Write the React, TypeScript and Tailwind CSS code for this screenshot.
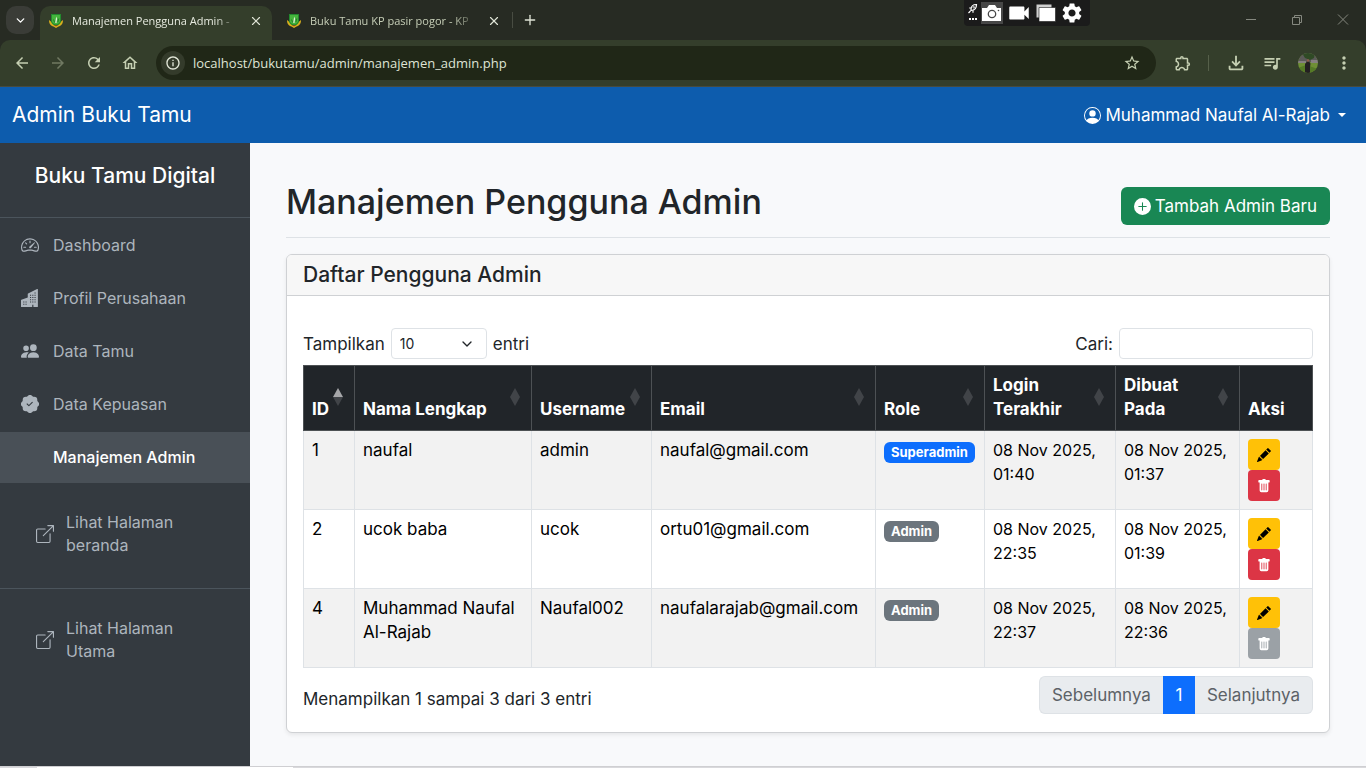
import type { ReactNode } from 'react';
import {
  BsBoxArrowUpRight,
  BsBuildingsFill,
  BsPatchCheckFill,
  BsPencilFill,
  BsPeopleFill,
  BsPersonCircle,
  BsPlusCircleFill,
  BsSpeedometer2,
  BsTrashFill,
} from 'react-icons/bs';
import {
  MdArrowBack,
  MdArrowForward,
  MdInfoOutline,
  MdMoreVert,
  MdOutlineExtension,
  MdOutlineFileDownload,
  MdOutlineHome,
  MdOutlineQueueMusic,
  MdRefresh,
  MdStarOutline,
  MdSettings,
  MdVideocam,
} from 'react-icons/md';
import { ChevronDown, Plus, X } from 'lucide-react';
import clsx from 'clsx';

type Admin = {
  id: number;
  name: string;
  username: string;
  email: string;
  role: 'Superadmin' | 'Admin';
  lastLogin: string;
  createdAt: string;
  canDelete: boolean;
};

const admins: Admin[] = [
  { id: 1, name: 'naufal', username: 'admin', email: 'naufal@gmail.com', role: 'Superadmin', lastLogin: '08 Nov 2025, 01:40', createdAt: '08 Nov 2025, 01:37', canDelete: true },
  { id: 2, name: 'ucok baba', username: 'ucok', email: 'ortu01@gmail.com', role: 'Admin', lastLogin: '08 Nov 2025, 22:35', createdAt: '08 Nov 2025, 01:39', canDelete: true },
  { id: 4, name: 'Muhammad Naufal Al-Rajab', username: 'Naufal002', email: 'naufalarajab@gmail.com', role: 'Admin', lastLogin: '08 Nov 2025, 22:37', createdAt: '08 Nov 2025, 22:36', canDelete: false },
];

const columns = [
  { label: 'ID', width: 'w-[51px]', sortable: true },
  { label: 'Nama Lengkap', width: 'w-[177px]', sortable: true },
  { label: 'Username', width: 'w-[120px]', sortable: true },
  { label: 'Email', width: '', sortable: true },
  { label: 'Role', width: 'w-[109px]', sortable: true },
  { label: 'Login Terakhir', width: 'w-[131px]', sortable: true },
  { label: 'Dibuat Pada', width: 'w-[124px]', sortable: true },
  { label: 'Aksi', width: 'w-[73px]', sortable: false },
];

const menu = [
  { label: 'Dashboard', icon: BsSpeedometer2 },
  { label: 'Profil Perusahaan', icon: BsBuildingsFill },
  { label: 'Data Tamu', icon: BsPeopleFill },
  { label: 'Data Kepuasan', icon: BsPatchCheckFill },
];

function Crest() {
  return (
    <svg viewBox="0 0 14 14" className="h-[14px] w-[14px] shrink-0">
      <path d="M0 6c0 4 2 6 4.500 6.500L7 14l2.500-1.500C12 12 14 10 14 6l-2.500 2h-9z" fill="#d9b01c" />
      <path d="M2 0h10v7c0 2.500-2 4-5 5-3-1-5-2.500-5-5z" fill="#238a2e" />
      <path d="M3 1h8v6.500C10 9.500 9 10 7 10.500 5 10 4 9.500 3 7.500z" fill="#45b53c" />
      <path d="M7.200 2.500l.9 2.300-.6 4.200H6.200l.5-3.500z" fill="#e4efd6" />
      <path d="M4.500 5.500l1.200 3M9.800 4.500l-.9 3.500" stroke="#1d6b28" strokeWidth=".8" />
      <path d="M5 11h4l-2 1.500z" fill="#8a4a1e" />
    </svg>
  );
}

function BrowserTab({ title, active }: { title: string; active?: boolean }) {
  return (
    <div
      className={clsx(
        'flex h-[34px] items-center px-[9px] pb-1',
        active ? 'w-[232px] rounded-t-[10px] bg-[#343e2b]' : 'ml-1 w-[235px] pl-[11px]'
      )}
    >
      <Crest />
      <span
        className={clsx(
          'ml-[9px] w-[168px] whitespace-nowrap text-[11px] [mask-image:linear-gradient(to_right,black_85%,transparent)]',
          active ? 'text-[#e6eadf]' : 'text-[#c5cdb6]'
        )}
      >
        {title}
      </span>
      <button aria-label="Tutup tab" className="ml-[9px] text-[#dfe4d6]">
        <X size={14} strokeWidth={2} />
      </button>
    </div>
  );
}

function CaptureBar() {
  return (
    <div className="absolute top-0 left-[964px] flex h-[26px] w-[126px] items-center rounded-b bg-[#1b1b1b] pl-1 text-white">
      <svg viewBox="0 0 10 20" className="h-5 w-[10px]" fill="none" stroke="white">
        <path d="M3 6.500C3 3.500 5 1.500 8.500 1.500 8.500 5 6.500 7.500 3 7.500zM3 5H1.200M5 8v1.800M.5 10l2-2" strokeWidth="1.200" />
        <circle cx="5.800" cy="4.300" r=".8" strokeWidth=".8" />
        <path d="M1 16h2M4 16h2M7 16h2" strokeWidth="2" />
      </svg>
      <svg viewBox="0 0 22 22" className="ml-[3px] h-[22px] w-[22px] bg-[#474747]">
        <path d="M1 6h5l2-3h6l2 3h4v13H1z" fill="white" />
        <circle cx="11" cy="12" r="3.700" fill="none" stroke="#474747" strokeWidth="1.300" />
        <circle cx="17.500" cy="8.500" r=".8" fill="#474747" />
      </svg>
      <MdVideocam className="ml-[3px] h-[26px] w-[26px]" />
      <svg viewBox="0 0 20 18" className="ml-1 h-[18px] w-5">
        <path d="M.5.5h15v13H.5z" fill="#cfcfcf" />
        <path d="M3 3.500h16.500v14H3z" fill="white" stroke="#1b1b1b" strokeWidth=".6" />
      </svg>
      <MdSettings className="ml-1 h-6 w-6" />
    </div>
  );
}

function BrowserChrome() {
  return (
    <div className="relative bg-[#272b23] font-['Open_Sans',sans-serif]">
      <div className="flex h-10 items-end pl-[6px]">
        <button aria-label="Cari tab" className="mb-[6px] flex h-7 w-7 items-center justify-center rounded-[10px] bg-[#3a3c37] text-white">
          <ChevronDown size={13} strokeWidth={2.5} />
        </button>
        <div className="ml-[6px] flex">
          <BrowserTab title="Manajemen Pengguna Admin -" active />
          <BrowserTab title="Buku Tamu KP pasir pogor - KP" />
        </div>
        <div className="mb-3 ml-px h-4 w-px bg-[#484c42]" />
        <button aria-label="Tab baru" className="mb-3 ml-[9px] text-[#dfe4d6]">
          <Plus size={16} strokeWidth={2} />
        </button>
        <svg viewBox="0 0 110 12" className="mr-4 mb-[14px] ml-auto h-3 w-[110px]" fill="none" stroke="#85887f">
          <path d="M6 5.500h10M52.500 3.500h7v7h-7zM54.500 3.500v-2h7v7h-2M98 .5l10 10M108 .5l-10 10" />
        </svg>
      </div>
      <CaptureBar />
      <div className="flex h-[47px] items-center rounded-t-[10px] border-b border-[#474b3e] bg-[#343e2b] pr-3 pl-[13px] text-[#c5cfb2]">
        <button aria-label="Kembali"><MdArrowBack size={18} /></button>
        <button aria-label="Maju" className="ml-[18px] text-[#707962]"><MdArrowForward size={18} /></button>
        <button aria-label="Muat ulang" className="ml-[18px]"><MdRefresh size={18} /></button>
        <button aria-label="Beranda" className="ml-[18px]"><MdOutlineHome size={18} /></button>
        <div className="ml-[17px] flex h-[34px] flex-1 items-center rounded-full bg-[#202717] pr-[15px] pl-[5px]">
          <span className="flex h-6 w-6 items-center justify-center rounded-full bg-[#343b2b] text-[#e3e8d9]">
            <MdInfoOutline size={16} />
          </span>
          <input
            aria-label="Alamat"
            defaultValue="localhost/bukutamu/admin/manajemen_admin.php"
            className="ml-2 flex-1 bg-transparent text-[13px] text-[#dfe4d5] outline-none"
          />
          <button aria-label="Tandai"><MdStarOutline size={18} /></button>
        </div>
        <button aria-label="Ekstensi" className="ml-[18px]"><MdOutlineExtension size={18} /></button>
        <div className="ml-4 h-4 w-px bg-[#56604a]" />
        <button aria-label="Unduhan" className="ml-4"><MdOutlineFileDownload size={22} /></button>
        <button aria-label="Media" className="ml-[15px]"><MdOutlineQueueMusic size={20} /></button>
        <svg viewBox="0 0 20 20" className="ml-4 h-5 w-5 rounded-full">
          <path d="M0 0h20v20H0z" fill="#6f8f35" />
          <path d="M0 0h20v9H0z" fill="#5b5a58" />
          <path d="M4 0h13l-1 5-4 2-5-2z" fill="#2f4a25" />
          <path d="M0 8h8v2H0zM13 7h7v3h-7z" fill="#857f80" />
          <path d="M0 15l8-3 12 4v4H0z" fill="#557a26" />
          <path d="M7 11l2-2.500h2l1.500 2-.5 4v5.500H7z" fill="#241f22" />
          <circle cx="10" cy="7.500" r="1.200" fill="#8f5d48" />
        </svg>
        <button aria-label="Menu" className="ml-4"><MdMoreVert size={20} /></button>
      </div>
    </div>
  );
}

function ExternalLink({ children }: { children: ReactNode }) {
  return (
    <a href="#" className="flex h-[105px] items-center gap-3 pr-12 pb-1 pl-9 leading-[23px]">
      <BsBoxArrowUpRight size={18} className="shrink-0" />
      <span>{children}</span>
    </a>
  );
}

function Sidebar() {
  return (
    <aside className="w-[250px] shrink-0 bg-[#343a40] text-[16px] text-[#adb5bd]">
      <h3 className="flex h-[75px] justify-center border-b border-[#4b545c] pt-[18px] text-[21px] leading-[30px] font-medium text-white">
        Buku Tamu Digital
      </h3>
      <nav>
        <div className="grid h-[214px] grid-rows-4 pb-[2px]">
          {menu.map(({ label, icon: Icon }) => (
            <a key={label} href="#" className="flex items-center gap-[14px] pl-[21px]">
              <Icon size={18} />
              {label}
            </a>
          ))}
        </div>
        <a href="#" className="flex h-[51px] items-center bg-[#495057] pb-[2px] pl-[53px] font-medium text-white">
          Manajemen Admin
        </a>
        <ExternalLink>Lihat Halaman beranda</ExternalLink>
        <div className="border-t border-[#4b545c]">
          <ExternalLink>Lihat Halaman Utama</ExternalLink>
        </div>
      </nav>
    </aside>
  );
}

function SortMark({ ascending }: { ascending: boolean }) {
  return (
    <svg viewBox="0 0 10 18" className="absolute right-[11px] bottom-6 h-[18px] w-[10px]">
      <path d="M5 0l5 9H0z" fill={ascending ? '#a6a7a9' : '#414448'} />
      <path d="M0 9h10l-5 9z" fill="#414448" />
    </svg>
  );
}

function AdminTable() {
  return (
    <table className="mt-[6px] w-full table-fixed border-collapse text-left text-[17px] text-black">
      <thead className="bg-[#212529] text-white">
        <tr>
          {columns.map((col) => (
            <th
              key={col.label}
              className={clsx(
                'relative border border-[#4d5154] pt-[7px] pb-[9px] pl-2 align-bottom font-bold',
                col.width,
                col.sortable ? 'pr-6' : 'pr-2'
              )}
            >
              {col.label}
              {col.sortable && <SortMark ascending={col.label === 'ID'} />}
            </th>
          ))}
        </tr>
      </thead>
      <tbody>
        {admins.map((admin) => (
          <tr key={admin.id} className="align-top odd:bg-[#f2f2f2] [&>td]:border [&>td]:border-[#dee2e6] [&>td]:px-2 [&>td]:pt-[7px] [&>td]:pb-2">
            <td>{admin.id}</td>
            <td>{admin.name}</td>
            <td>{admin.username}</td>
            <td>{admin.email}</td>
            <td>
              <span
                className={clsx(
                  'mt-1 block w-fit rounded-[6px] px-[7px] text-[13px] leading-[21px] font-bold text-white',
                  admin.role === 'Superadmin' ? 'bg-[#0d6efd]' : 'bg-[#6c757d]'
                )}
              >
                {admin.role}
              </span>
            </td>
            <td className="text-[16px]">{admin.lastLogin}</td>
            <td className="text-[16px]">{admin.createdAt}</td>
            <td>
              <button aria-label="Edit" className="mt-px flex h-[31px] w-8 items-center justify-center rounded bg-[#ffc107] text-black">
                <BsPencilFill size={14} />
              </button>
              <button
                aria-label="Hapus"
                disabled={!admin.canDelete}
                className={clsx(
                  'flex h-[31px] w-8 items-center justify-center rounded text-white',
                  admin.canDelete ? 'bg-[#dc3545]' : 'bg-[#9ba1a6]'
                )}
              >
                <BsTrashFill size={14} />
              </button>
            </td>
          </tr>
        ))}
      </tbody>
    </table>
  );
}

export default function App() {
  return (
    <div className="flex min-h-screen flex-col bg-[#f8f9fb] font-['Inter',sans-serif] text-[17px] leading-6 text-[#212529]">
      <BrowserChrome />
      <header className="flex h-14 items-center justify-between bg-[#0d5cad] pr-5 pl-3 text-white">
        <a href="#" className="text-[21px]">Admin Buku Tamu</a>
        <button className="flex items-center">
          <BsPersonCircle size={17} className="mr-1" />
          Muhammad Naufal Al-Rajab
          <span className="ml-2 border-x-4 border-t-4 border-x-transparent border-t-white" />
        </button>
      </header>

      <div className="flex flex-1">
        <Sidebar />
        <main className="min-w-0 flex-1 px-9 pt-10 pb-8">
          <div className="flex items-center justify-between border-b border-[#dee2e6] pb-3">
            <h1 className="pb-1 text-[34px] leading-[38px] font-medium">Manajemen Pengguna Admin</h1>
            <button className="mt-1 flex h-[38px] items-center rounded-[6px] bg-[#198754] px-[13px] text-white">
              <BsPlusCircleFill size={17} className="mr-1" />
              Tambah Admin Baru
            </button>
          </div>

          <section className="mt-4 overflow-hidden rounded-[6px] border border-[#cfd1d4] bg-white shadow-[0_2px_4px_rgba(0,0,0,0.075)]">
            <h2 className="border-b border-[#cfd1d4] bg-[#f7f7f7] px-4 py-2 text-[21px] leading-6 font-medium">Daftar Pengguna Admin</h2>
            <div className="px-4 pt-8 pb-[18px]">
              <div className="flex items-center justify-between">
                <label className="flex items-center gap-[6px]">
                  Tampilkan
                  <span className="relative">
                    <select defaultValue="10" className="block h-[31px] w-24 appearance-none rounded border border-[#dee2e6] bg-white px-2 text-[14px]">
                      <option>10</option>
                      <option>25</option>
                      <option>50</option>
                    </select>
                    <ChevronDown size={16} className="pointer-events-none absolute top-2 right-3" />
                  </span>
                  entri
                </label>
                <label className="flex items-center gap-[6px]">
                  Cari:
                  <input type="search" className="h-[31px] w-[194px] rounded border border-[#dee2e6] bg-white px-2 text-[14px]" />
                </label>
              </div>

              <AdminTable />

              <div className="mt-2 flex items-center justify-between">
                <p className="pt-2">Menampilkan 1 sampai 3 dari 3 entri</p>
                <div className="flex h-[38px] items-stretch">
                  <button disabled className="rounded-l-[6px] border border-r-0 border-[#dee2e6] bg-[#e9ecef] px-3 text-[#5c6267]">Sebelumnya</button>
                  <button className="w-8 bg-[#0d6efd] text-white">1</button>
                  <button disabled className="rounded-r-[6px] border border-l-0 border-[#dee2e6] bg-[#e9ecef] px-3 text-[#5c6267]">Selanjutnya</button>
                </div>
              </div>
            </div>
          </section>
        </main>
      </div>
      <div className="h-[2px] border-t border-[#cfcfd2] bg-[#d9d9dc] pl-[37px]">
        <div className="h-px w-64 bg-white" />
      </div>
    </div>
  );
}
